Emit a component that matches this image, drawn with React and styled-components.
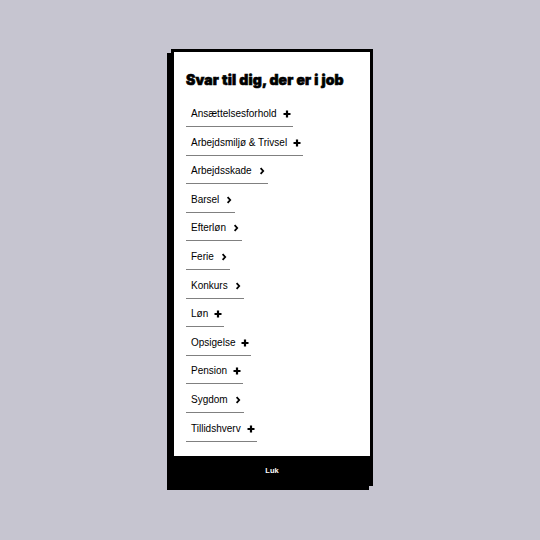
import styled, { createGlobalStyle } from "styled-components";

const GlobalStyle = createGlobalStyle`
  html, body {
    margin: 0;
    padding: 0;
    background: #c6c5d0;
  }
`;

const items = [
  { label: "Ansættelsesforhold", icon: "plus" },
  { label: "Arbejdsmiljø & Trivsel", icon: "plus" },
  { label: "Arbejdsskade", icon: "chevron" },
  { label: "Barsel", icon: "chevron" },
  { label: "Efterløn", icon: "chevron" },
  { label: "Ferie", icon: "chevron" },
  { label: "Konkurs", icon: "chevron" },
  { label: "Løn", icon: "plus" },
  { label: "Opsigelse", icon: "plus" },
  { label: "Pension", icon: "plus" },
  { label: "Sygdom", icon: "chevron" },
  { label: "Tillidshverv", icon: "plus" },
];

function PlusIcon() {
  return (
    <svg width="8" height="8" viewBox="0 0 8 8">
      <path d="M4 0.5V7.5M0.5 4H7.5" stroke="#000" strokeWidth="2.2" />
    </svg>
  );
}

function ChevronIcon() {
  return (
    <svg width="8" height="8" viewBox="0 0 8 8">
      <path d="M2.6 1.2L5.2 4L2.6 6.8" stroke="#000" strokeWidth="1.8" fill="none" />
    </svg>
  );
}

function App() {
  return (
    <>
      <GlobalStyle />
      <Page>
        <Card>
          <Content>
            <Title>Svar til dig, der er i job</Title>
            <List>
              {items.map((item) => (
                <Item key={item.label}>
                  <Label>{item.label}</Label>
                  <IconBox>{item.icon === "plus" ? <PlusIcon /> : <ChevronIcon />}</IconBox>
                </Item>
              ))}
            </List>
          </Content>
          <Footer>Luk</Footer>
        </Card>
      </Page>
    </>
  );
}

const Page = styled.div`
  min-height: 540px;
  box-sizing: border-box;
  display: flex;
  justify-content: center;
  align-items: flex-start;
  padding: 49px 0 0 4px;
`;

const Card = styled.div`
  width: 202px;
  box-sizing: border-box;
  border: 3px solid #000;
  background: #fff;
  box-shadow: -4px 4px 0 #000;
  display: flex;
  flex-direction: column;
`;

const Content = styled.div`
  padding: 18px 12px 14px;
  height: 404px;
  box-sizing: border-box;
`;

const Title = styled.h1`
  margin: 0 0 13px;
  font-family: Inter, "Noto Sans", sans-serif;
  font-weight: 900;
  font-size: 14px;
  line-height: 20px;
  letter-spacing: 0.15px;
  -webkit-text-stroke: 0.6px #000;
  color: #000;
  white-space: nowrap;
`;

const List = styled.div`
  display: flex;
  flex-direction: column;
  align-items: flex-start;
  gap: 4.6px;
`;

const Item = styled.div`
  display: inline-flex;
  align-items: center;
  gap: 6px;
  height: 24px;
  box-sizing: border-box;
  padding: 5px 2px 6px 5px;
  border-bottom: 1px solid #808080;
`;

const Label = styled.span`
  font-family: "Liberation Sans", Arial, sans-serif;
  font-size: 10px;
  line-height: 12px;
  color: #000;
`;

const IconBox = styled.span`
  display: flex;
  align-items: center;
  justify-content: center;
  width: 8px;
  height: 8px;
`;

const Footer = styled.div`
  height: 26px;
  background: #000;
  color: #fff;
  display: flex;
  align-items: center;
  justify-content: center;
  font-family: "Liberation Sans", Arial, sans-serif;
  font-weight: 700;
  font-size: 7.5px;
  padding-top: 1px;
`;

export default App;
